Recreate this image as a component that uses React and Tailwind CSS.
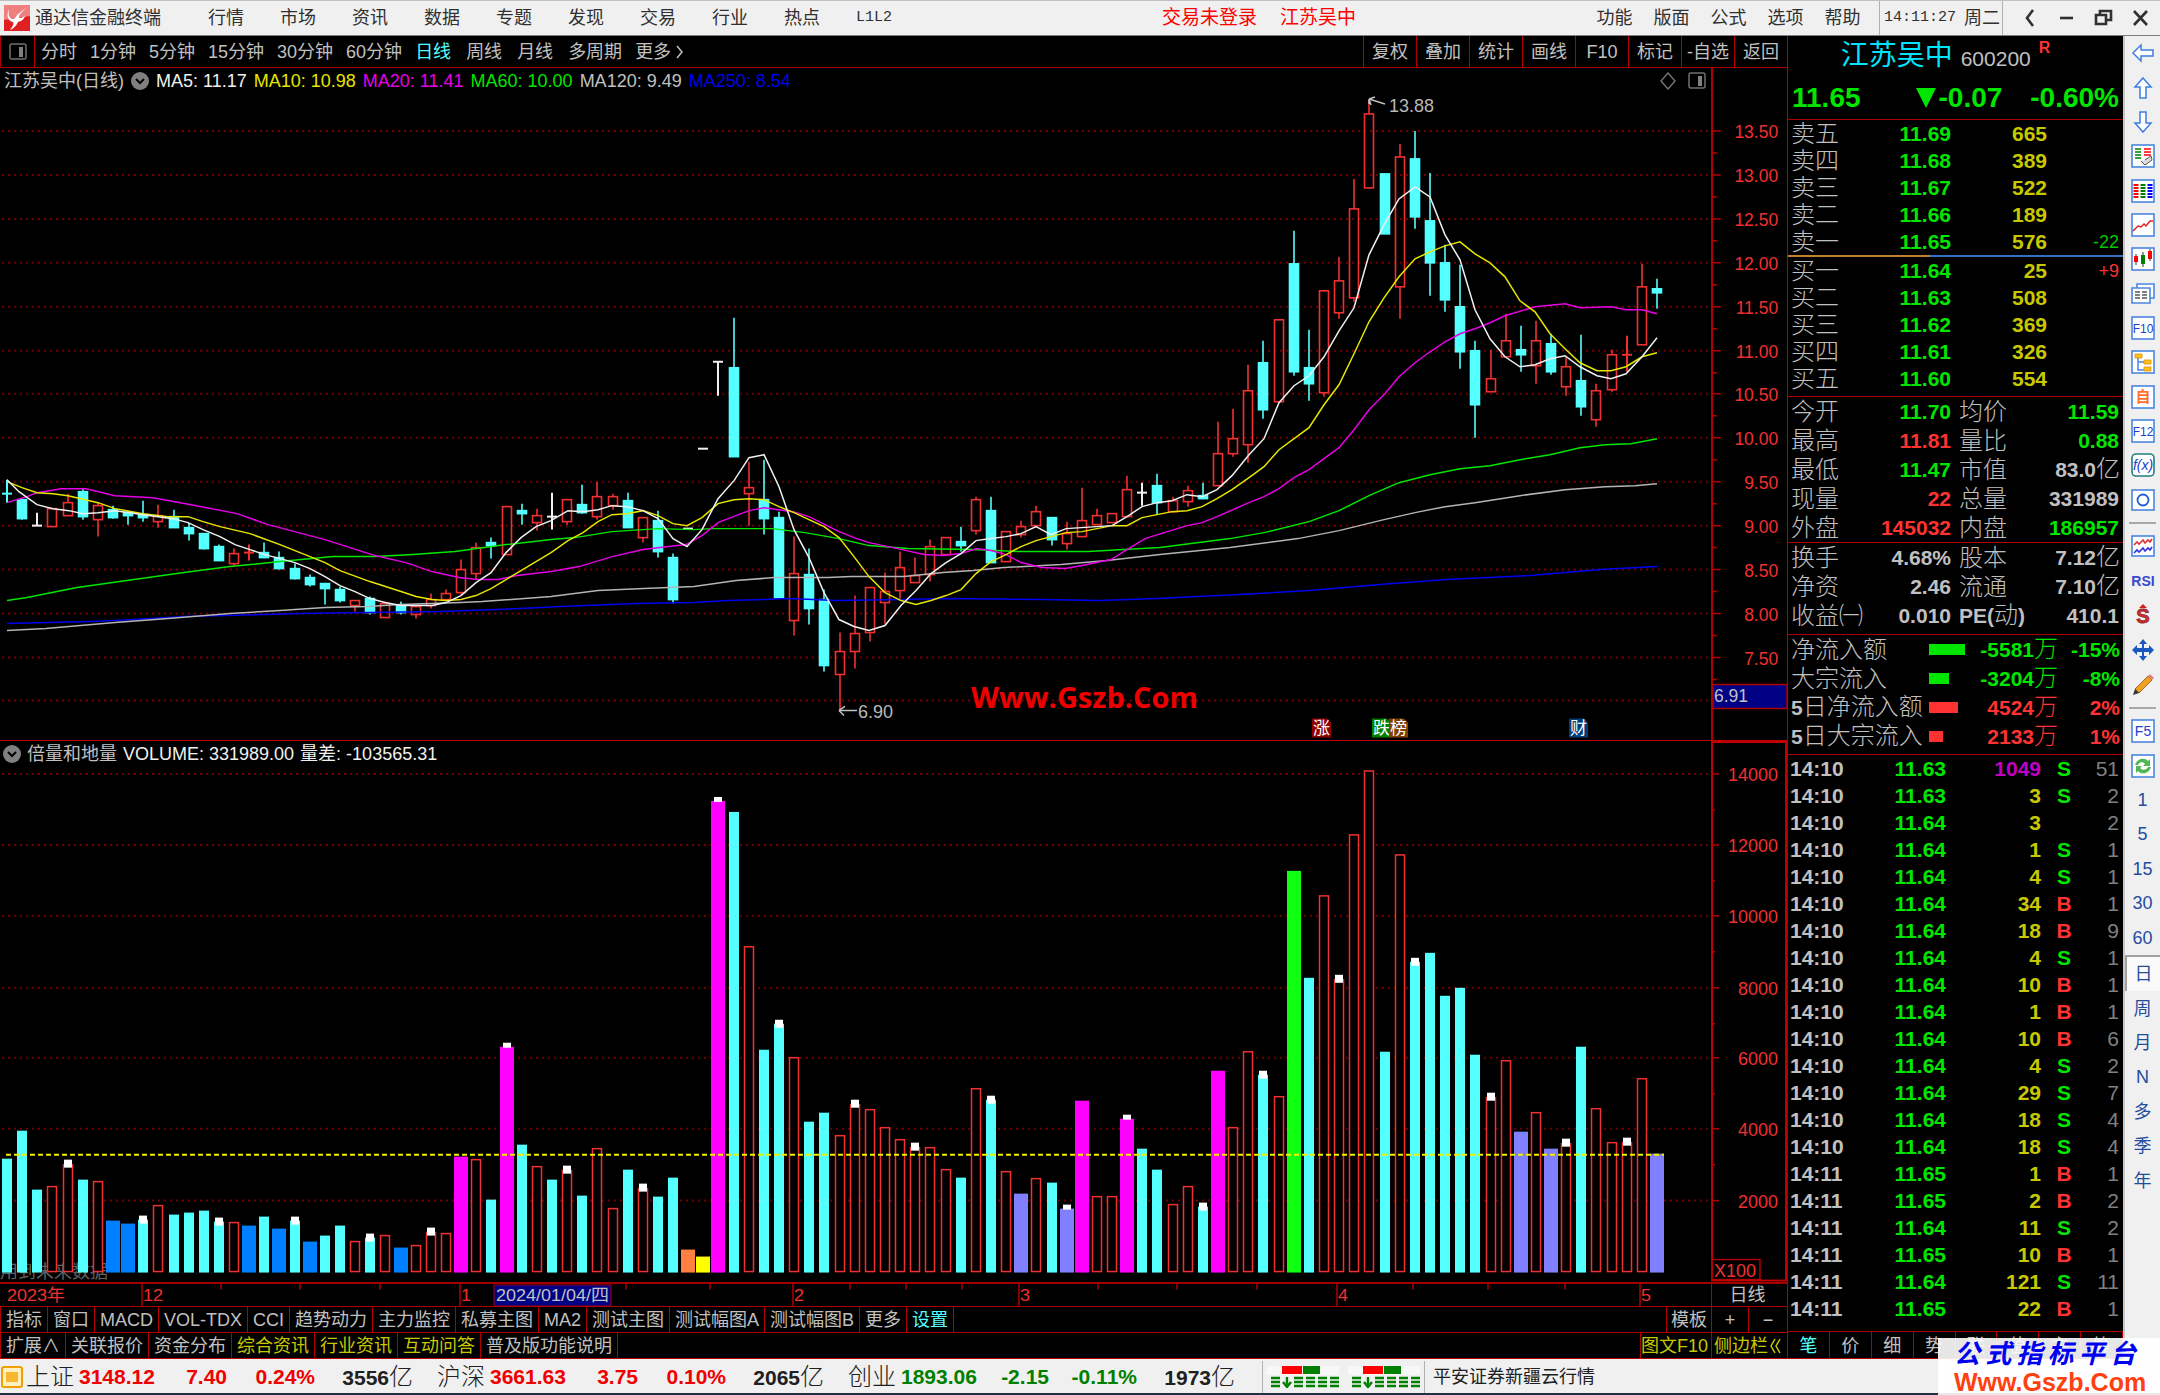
import React from "react";

const STEP = 15.138;
const cx = (i) => Math.round(7 + i * STEP);

// kind: r = rising, c = falling, w = flat; then high, low, body top, body bottom
const CANDLES = [
  ["c", 480, 503, 494, 495], ["c", 499, 520, 500, 519], ["w", 513, 526, 526, 526], ["r", 509, 527, 509, 527], ["r", 494, 516, 503, 516],
  ["c", 489, 520, 492, 517], ["r", 503, 537, 506, 520], ["c", 506, 519, 510, 518], ["c", 511, 525, 513, 516], ["c", 501, 522, 515, 518],
  ["r", 505, 528, 516, 522], ["c", 510, 528, 517, 528], ["c", 523, 541, 528, 534], ["c", 534, 550, 534, 549], ["c", 545, 561, 547, 561],
  ["r", 549, 567, 554, 564], ["r", 545, 561, 553, 555], ["c", 543, 558, 553, 558], ["c", 552, 570, 558, 569], ["c", 564, 580, 569, 579],
  ["c", 575, 587, 578, 585], ["c", 584, 605, 584, 589], ["c", 587, 603, 590, 601], ["r", 601, 612, 601, 606], ["c", 597, 615, 599, 613],
  ["r", 602, 618, 604, 618], ["c", 602, 615, 606, 613], ["r", 607, 619, 607, 615], ["r", 594, 609, 600, 606], ["r", 590, 601, 594, 600],
  ["r", 560, 595, 570, 593], ["r", 543, 580, 548, 574], ["c", 538, 559, 543, 546], ["r", 506, 555, 507, 555], ["c", 504, 525, 511, 514],
  ["r", 509, 531, 516, 523], ["w", 493, 530, 517, 517], ["r", 500, 525, 500, 522], ["c", 485, 514, 505, 513], ["r", 482, 520, 497, 517],
  ["r", 494, 510, 497, 506], ["c", 493, 528, 501, 528], ["r", 518, 543, 518, 538], ["c", 511, 558, 521, 552], ["c", 554, 604, 558, 600],
  ["w", 529, 529, 529, 529], ["w", 449, 449, 449, 449], ["w", 362, 396, 362, 362], ["c", 318, 457, 368, 457], ["r", 462, 526, 488, 494],
  ["c", 460, 535, 500, 519], ["c", 512, 598, 518, 598], ["r", 537, 636, 574, 621], ["c", 549, 625, 575, 609], ["c", 590, 672, 600, 666],
  ["r", 633, 711, 652, 675], ["r", 596, 669, 634, 652], ["r", 588, 642, 588, 633], ["r", 573, 625, 592, 603], ["r", 552, 600, 568, 591],
  ["r", 558, 583, 576, 583], ["r", 540, 582, 547, 575], ["r", 538, 555, 538, 555], ["c", 527, 552, 542, 546], ["r", 497, 535, 500, 531],
  ["c", 497, 563, 511, 563], ["r", 532, 562, 532, 562], ["r", 521, 538, 527, 535], ["r", 506, 528, 512, 526], ["c", 518, 546, 518, 540],
  ["r", 522, 550, 534, 544], ["r", 488, 537, 521, 537], ["r", 509, 525, 516, 525], ["r", 514, 523, 514, 523], ["r", 476, 517, 490, 517],
  ["w", 483, 506, 493, 493], ["c", 474, 515, 486, 503], ["r", 497, 512, 501, 512], ["r", 486, 507, 491, 502], ["c", 483, 499, 496, 499],
  ["r", 422, 486, 454, 486], ["r", 409, 457, 439, 454], ["r", 365, 463, 391, 445], ["c", 341, 419, 363, 410], ["r", 320, 402, 320, 402],
  ["c", 231, 376, 264, 372], ["c", 330, 401, 368, 384], ["r", 291, 397, 291, 393], ["r", 257, 319, 281, 313], ["r", 179, 302, 209, 298],
  ["r", 100, 188, 114, 188], ["c", 174, 234, 174, 234], ["r", 144, 319, 157, 287], ["c", 131, 229, 159, 217], ["c", 173, 296, 221, 263],
  ["c", 245, 312, 263, 300], ["c", 265, 369, 307, 352], ["c", 341, 438, 351, 405], ["r", 350, 392, 379, 392], ["r", 314, 357, 341, 357],
  ["c", 326, 372, 350, 355], ["r", 321, 384, 341, 366], ["c", 334, 375, 344, 372], ["r", 357, 396, 367, 387], ["c", 335, 416, 381, 407],
  ["r", 384, 427, 391, 420], ["r", 350, 392, 355, 390], ["r", 336, 372, 355, 355], ["r", 264, 345, 287, 345], ["c", 279, 309, 289, 293],
];

const MA_LINES = [
  { color: "#0000f0", points: "7,624 90,622 134,620 184,617 300,614 440,612 520,609 560,607 636,604 694,603 728,601 790,599 836,601 904,600 943,599 1042,600 1100,601 1157,599 1240,595 1309,591 1380,585 1446,580 1530,576 1600,570 1657,567" },
  { color: "#b4b4b4", points: "7,631 46,629 115,623 168,619 230,614 280,611 325,608 367,607 400,605 461,603 482,602 551,597 598,591 644,589 694,587 736,581 774,578 828,578 851,577 904,577 943,573 973,571 1004,568 1061,565 1107,561 1160,555 1230,548 1298,539 1339,531 1384,520 1415,513 1445,507 1475,503 1520,496 1565,490 1605,487 1635,486 1657,484" },
  { color: "#00e600", points: "7,601 27,598 77,588 134,580 184,573 230,567 280,562 333,557 375,557 413,555 455,552 506,545 551,540 575,538 612,532 658,529 694,530 713,529 772,529 805,533 839,539 869,546 908,549 973,550 1019,552 1088,552 1160,548 1230,539 1264,533 1309,522 1339,511 1369,496 1399,483 1430,475 1460,469 1490,466 1520,460 1550,455 1580,448 1605,445 1631,444 1657,439" },
  { color: "#e600e6", points: "7,503 27,497 37,493 61,489 86,489 115,496 153,498 191,505 237,514 268,525 325,540 375,556 406,563 432,572 459,578 478,580 498,580 517,576 551,572 579,567 612,557 643,550 686,545 702,536 718,523 749,511 764,508 793,512 809,517 839,532 854,538 869,543 893,548 924,555 943,556 961,554 977,549 991,551 1006,555 1021,563 1042,568 1065,569 1082,566 1111,560 1127,550 1145,539 1161,534 1187,526 1202,523 1217,517 1249,503 1264,497 1279,489 1294,478 1309,470 1324,459 1339,448 1354,430 1369,410 1384,395 1399,377 1415,363 1430,352 1445,342 1460,334 1475,329 1490,323 1505,316 1535,307 1565,304 1580,308 1611,307 1626,310 1642,310 1657,314" },
  { color: "#e6e600", points: "7,482 22,488 37,493 53,494 68,496 98,503 115,509 143,514 168,517 188,517 203,522 220,527 250,534 280,545 310,557 325,563 340,571 370,582 401,592 416,597 432,600 446,601 461,600 476,596 491,589 506,580 521,571 551,553 568,541 583,533 598,522 612,515 627,514 643,511 658,516 673,524 687,526 702,518 718,504 734,500 749,499 764,500 779,507 794,513 809,520 824,527 839,538 854,557 869,577 885,593 901,601 916,605 931,601 946,596 961,590 976,574 991,562 1006,555 1021,547 1036,541 1066,533 1082,532 1112,526 1127,526 1142,518 1157,515 1172,512 1187,511 1202,507 1217,499 1232,490 1249,478 1264,467 1279,450 1309,428 1324,405 1339,385 1354,354 1369,322 1384,298 1399,277 1415,259 1430,252 1445,246 1460,242 1475,254 1490,263 1505,277 1520,301 1535,312 1550,334 1565,349 1580,363 1597,371 1611,371 1626,367 1642,357 1657,353" },
  { color: "#f0f0f0", points: "7,480 19,492 37,505 53,509 69,511 83,514 98,513 115,511 130,513 143,515 158,517 173,519 188,523 203,530 220,537 235,545 250,550 265,555 280,559 295,563 310,569 325,577 340,586 355,592 370,599 385,603 401,606 432,606 446,603 461,596 476,583 491,573 506,553 521,538 536,527 551,521 568,511 583,512 598,510 612,506 627,507 643,511 658,519 673,539 687,547 702,530 718,499 734,481 749,458 764,455 779,487 794,530 809,558 824,593 839,620 854,627 869,631 885,626 901,606 916,591 931,574 946,563 961,554 976,541 991,539 1006,537 1021,534 1036,527 1051,535 1066,529 1112,526 1127,517 1142,507 1157,503 1172,501 1187,495 1202,497 1217,490 1232,476 1249,455 1264,439 1279,403 1294,386 1309,376 1324,357 1339,331 1354,308 1369,255 1384,225 1399,199 1415,187 1430,197 1445,235 1460,260 1475,310 1490,339 1505,357 1520,367 1535,365 1550,359 1565,356 1580,367 1597,376 1611,379 1626,374 1642,357 1657,338" },
];

const PRICE_GRID = [
  ["13.50", 131], ["13.00", 175], ["12.50", 219], ["12.00", 263], ["11.50", 307], ["11.00", 351], ["10.50", 394],
  ["10.00", 438], ["9.50", 482], ["9.00", 526], ["8.50", 570], ["8.00", 614], ["7.50", 658], ["", 701],
];

// colour key, top of the bar; a trailing * marks the bars that carry a white cap
const VOLUME = (
  "c1159 c1131 c1190 r1186 r1164* c1180 r1181 b1221 b1224 c1220* r1205 c1215 c1213 c1211 c1222* r1222 b1226 c1217 b1229 c1221* " +
  "b1242 c1236 c1226 r1241 c1238* r1235 b1248 r1245 r1232* r1233 m1157 r1159 c1200 m1047* c1145 r1166 c1180 r1170* c1196 r1148 " +
  "r1208 c1170 r1188* c1197 c1178 o1250 y1257 m801* c812 r946 c1050 c1024* r1057 c1122 c1113 r1135 r1104* r1109 r1127 r1139 " +
  "r1147* r1147 r1169 c1178 r1088 c1100* r1171 p1194 r1178 c1183 p1209* m1101 r1196 r1196 m1119* c1149 c1170 r1204 r1186 c1207* " +
  "m1071 r1127 r1051 c1075* r1096 g871 c978 r895 r979* r834 r770 c1052 r854 c962* c953 c996 c988 c1055 r1097* r1060 " +
  "p1132 r1112 p1149 r1143* c1047 r1108 r1142 r1142* r1078 p1154"
).split(" ");

const VOL_COLORS = { c: "#54ffff", b: "#0080ff", m: "#ff00ff", o: "#ff8040", y: "#ffff00", p: "#8080ff", g: "#10ff10" };
const VOL_GRID = [["14000", 774], ["12000", 845], ["10000", 916], ["8000", 988], ["6000", 1058], ["4000", 1129], ["2000", 1201]];
const BASE = 1273;
const RED = "#f03030";

function PriceChart() {
  return (
    <svg viewBox="0 68 1711 673" preserveAspectRatio="none" className="block h-full w-full">
      {PRICE_GRID.map(([, y]) => (
        <line key={y} x1="2" x2="1711" y1={y} y2={y} stroke="#a00000" strokeWidth="2" strokeDasharray="2 4" opacity="0.7" />
      ))}
      {CANDLES.map(([k, h, l, t, b], i) => {
        const x = cx(i);
        const color = k === "c" ? "#54ffff" : k === "r" ? RED : "#f0f0f0";
        if (b - t < 3)
          return (
            <g key={i} stroke={color} strokeWidth="2">
              {l > h && <line x1={x} x2={x} y1={h} y2={l} />}
              <line x1={x - 5} x2={x + 5} y1={t} y2={t} />
            </g>
          );
        return (
          <g key={i} stroke={color} strokeWidth="1.6">
            {h < t && <line x1={x} x2={x} y1={h} y2={t} />}
            {l > b && <line x1={x} x2={x} y1={b} y2={l} />}
            <rect x={x - 4.5} y={t} width="9" height={b - t} fill={k === "c" ? color : "none"} />
          </g>
        );
      })}
      {MA_LINES.map((m) => (
        <polyline key={m.color} points={m.points} fill="none" stroke={m.color} strokeWidth="1.5" />
      ))}
      <g fill="none" stroke="#c0c0c0" strokeWidth="1.5">
        <path d="M1369 99l16 5M1369 99l6-2M1369 99l2 6M1369 99v5" />
        <path d="M839 711h18M839 711l6-4M839 711l5 5" />
      </g>
      <g fontSize="18" fill="#b8b8b8">
        <text x="1389" y="112">13.88</text>
        <text x="858" y="719">6.90</text>
      </g>
      <text x="971" y="709" fontSize="29" fontWeight="700" fill="#ee0000" fontFamily="Open Sans">Www.Gszb.Com</text>
      {[["涨", 1312, "#8c0000"], ["跌", 1372, "#008000"], ["榜", 1389, "#804000"], ["财", 1569, "#003c78"]].map(([t, x, c]) => (
        <g key={t}>
          <path d={`M${x} 719h15l4 4v15h-19z`} fill={c} />
          <text x={x + 1} y="735" fontSize="17" fontWeight="400" fill="#fff">{t}</text>
        </g>
      ))}
    </svg>
  );
}

function PriceAxis() {
  return (
    <svg viewBox="1711 68 76 673" preserveAspectRatio="none" className="block h-full w-full">
      {PRICE_GRID.map(([label, y]) => (
        <g key={y}>
          {label && <path d={`M1711 ${y}h8M1711 ${y + 22}h4`} stroke="#b00000" strokeWidth="1.5" />}
          <text x="1778" y={y + 7} textAnchor="end" fontSize="18" fill={RED}>{label}</text>
        </g>
      ))}
      <rect x="1711" y="685" width="76" height="24" fill="#000084" stroke="#b00000" strokeWidth="1.5" />
      <text x="1712" y="703" fontSize="18" fill="#c0c0c0">6.91</text>
    </svg>
  );
}

function VolumeChart() {
  return (
    <svg viewBox="0 741 1711 541" preserveAspectRatio="none" className="block h-full w-full">
      <text x="0" y="1278" fontSize="18" fill="#606060">用到未来数据</text>
      {VOL_GRID.map(([, y]) => (
        <line key={y} x1="2" x2="1711" y1={y} y2={y} stroke="#a00000" strokeWidth="2" strokeDasharray="2 4" opacity="0.7" />
      ))}
      {VOLUME.map((v, i) => {
        const k = v[0];
        const y = parseInt(v.slice(1), 10);
        const x = cx(i);
        const wide = k !== "r" && k !== "c";
        const half = wide ? 7 : 5;
        const cap = v.endsWith("*") && <rect x={x - 4} y={y - 4} width="8" height={wide ? 5 : 8} fill="#fff" />;
        return (
          <g key={i}>
            {k === "r" ? (
              <rect x={x - 4.5} y={y + 1} width="9" height={BASE - y - 2} fill="#000" stroke={RED} strokeWidth="1.5" />
            ) : (
              <rect x={x - half} y={y} width={half * 2} height={BASE - y} fill={VOL_COLORS[k]} />
            )}
            {cap}
          </g>
        );
      })}
      <line x1="6" x2="1664" y1="1155" y2="1155" stroke="#f0f000" strokeWidth="2" strokeDasharray="5 3" />
    </svg>
  );
}

function VolumeAxis() {
  return (
    <svg viewBox="1711 741 76 541" preserveAspectRatio="none" className="block h-full w-full">
      <rect x="1712" y="742" width="74" height="539" fill="none" stroke="#c00000" strokeWidth="2" />
      {VOL_GRID.map(([label, y]) => (
        <g key={y}>
          <path d={`M1711 ${y}h8${y < 1200 ? `M1711 ${y + 36}h4` : ""}`} stroke="#b00000" strokeWidth="1.5" />
          <text x="1778" y={y + 7} textAnchor="end" fontSize="18" fill={RED}>{label}</text>
        </g>
      ))}
      <rect x="1712" y="1260" width="48" height="20" fill="none" stroke="#b00000" strokeWidth="1.5" />
      <text x="1714" y="1277" fontSize="18" fill={RED}>X100</text>
    </svg>
  );
}

function DateAxis() {
  return (
    <svg viewBox="0 1282 1711 24" preserveAspectRatio="none" className="block h-full w-full">
      <path
        d="M221 1282v6M300 1282v6M380 1282v6M626 1282v6M710 1282v6M850 1282v6M906 1282v6M962 1282v6M1098 1282v6M1177 1282v6M1257 1282v6M1413 1282v6M1488 1282v6M1565 1282v6M142 1282v24M460 1282v24M793 1282v24M1019 1282v24M1337 1282v24M1640 1282v24"
        stroke="#b00000"
        strokeWidth="1.5"
      />
      <rect x="494" y="1283" width="117" height="23" fill="#000084" stroke="#b00000" />
      <g fontSize="18" fill={RED}>
        <text x="7" y="1301">2023年</text>
        <text x="143" y="1301">12</text>
        <text x="461" y="1301">1</text>
        <text x="794" y="1301">2</text>
        <text x="1020" y="1301">3</text>
        <text x="1338" y="1301">4</text>
        <text x="1641" y="1301">5</text>
        <text x="496" y="1301" fill="#c0c0c0">2024/01/04/四</text>
      </g>
    </svg>
  );
}

function Chevron() {
  return (
    <svg viewBox="0 0 18 18" className="block size-[18px]">
      <circle cx="9" cy="9" r="9" fill="#808080" />
      <path d="M5 7l4 4 4-4" fill="none" stroke="#000" strokeWidth="2" />
    </svg>
  );
}

function PanelIcon() {
  return (
    <svg viewBox="0 0 18 18" className="block size-[18px]">
      <rect x="1" y="1" width="16" height="15" rx="2" fill="none" stroke="#707070" strokeWidth="1.5" />
      <rect x="10" y="4" width="4" height="10" fill="#808080" />
    </svg>
  );
}

function Header() {
  return (
    <header className="flex h-9 shrink-0 items-center border-t border-b border-t-[#c0c0c0] border-b-[#808080] bg-[#f0f0f0] text-lg text-[#303030]">
      <svg viewBox="0 0 26 26" className="ml-1 block size-[26px] shrink-0">
        <rect width="26" height="26" fill="#e02020" />
        <path d="M0 0h26v11L0 15z" fill="#f08080" />
        <path d="M5 4c-1 6 0 9 3 10 3 0 4-2 5-4l10-8c-6 6-8 8-8 10 0 2 3 1 6-1-2 5-4 5-7 6-1 2-3 6-8 8 3-4 4-6 3-8-5-1-7-6-4-13z" fill="#fff" />
      </svg>
      <div className="ml-[5px] whitespace-nowrap">通达信金融终端</div>
      <nav className="ml-[29px] flex">
        {["行情", "市场", "资讯", "数据", "专题", "发现", "交易", "行业", "热点"].map((t) => (
          <button key={t} className="w-[72px]">{t}</button>
        ))}
        <button className="w-[72px] font-['Liberation_Mono',monospace] text-[15px]">L1L2</button>
      </nav>
      <div className="ml-auto flex gap-[23px] pr-[230px] text-[19px] text-[#ff0000]">
        <button>交易未登录</button>
        <button>江苏吴中</button>
      </div>
      <nav className="flex">
        {["功能", "版面", "公式", "选项", "帮助"].map((t) => (
          <button key={t} className="w-[57px]">{t}</button>
        ))}
      </nav>
      <div className="ml-2 flex h-full w-[124px] items-center gap-2 border-x border-[#b0b0b0] pl-1">
        <span className="font-['Liberation_Mono',monospace] text-[15px]">14:11:27</span>
        <span>周二</span>
      </div>
      <div className="flex w-[157px] shrink-0 items-center justify-around pl-2 text-[#303030]">
        {[
          ["后退", "M13 2L7 10l6 8"],
          ["最小化", "M3 10h13"],
          ["还原", "M2 7h10v9H2zM6 7V3h11v9h-4"],
          ["关闭", "M3 3l13 14M16 3L3 17"],
        ].map(([name, d]) => (
          <button key={name} aria-label={name}>
            <svg viewBox="0 0 20 20" className="block size-5">
              <path d={d} fill="none" stroke="currentColor" strokeWidth="2.6" />
            </svg>
          </button>
        ))}
      </div>
    </header>
  );
}

function PeriodBar() {
  return (
    <div className="flex h-8 shrink-0 items-stretch border-b border-l border-[#b00000] text-lg">
      <button aria-label="侧栏" className="flex w-[34px] items-center justify-center border-r border-[#b00000]">
        <PanelIcon />
      </button>
      <nav className="ml-1.5 flex items-center gap-[13px]">
        {["分时", "1分钟", "5分钟", "15分钟", "30分钟", "60分钟"].map((t) => (
          <button key={t}>{t}</button>
        ))}
        <div className="flex items-center gap-[15px]">
          {["日线", "周线", "月线", "多周期"].map((t) => (
            <button key={t} className={t === "日线" ? "text-[#54ffff]" : ""}>{t}</button>
          ))}
        </div>
        <button className="flex items-center gap-1">
          更多
          <svg viewBox="0 0 10 18" className="block h-[18px] w-2.5"><path d="M2 3l5 6-5 6" fill="none" stroke="#c0c0c0" strokeWidth="1.5" /></svg>
        </button>
      </nav>
      <div className="ml-auto flex">
        {["复权", "叠加", "统计", "画线", "F10", "标记", "-自选", "返回"].map((t) => (
          <button key={t} className="w-[53px] border-l border-[#b00000] text-center whitespace-nowrap">{t}</button>
        ))}
      </div>
    </div>
  );
}

const TABS = ["指标", "窗口", "MACD", "VOL-TDX", "CCI", "趋势动力", "主力监控", "私募主图", "MA2", "测试主图", "测试幅图A", "测试幅图B", "更多", "设置"];
const LINKS = ["扩展∧", "关联报价", "资金分布", "综合资讯", "行业资讯", "互动问答", "普及版功能说明"];

function ChartArea() {
  return (
    <section className="flex min-w-0 flex-1 flex-col">
      <PeriodBar />
      <div className="relative flex min-h-0 flex-[673_1_0%] border-b border-[#c00000]">
        <div className="min-w-0 flex-1"><PriceChart /></div>
        <div className="w-[76px] border-l-2 border-[#b00000]"><PriceAxis /></div>
        <div className="absolute inset-x-0 top-0 flex h-[26px] items-center gap-[7px] pr-[81px] pl-1 text-lg whitespace-nowrap">
          <span>江苏吴中(日线)</span>
          <Chevron />
          <span className="text-[#f0f0f0]">MA5: 11.17</span>
          <span className="text-[#e6e600]">MA10: 10.98</span>
          <span className="text-[#e600e6]">MA20: 11.41</span>
          <span className="text-[#00e600]">MA60: 10.00</span>
          <span>MA120: 9.49</span>
          <span className="text-[#0000f0]">MA250: 8.54</span>
          <svg viewBox="0 0 18 18" className="mr-1 ml-auto block size-[18px]"><path d="M9 1l7 8-7 8-7-8z" fill="none" stroke="#707070" strokeWidth="1.5" /></svg>
          <PanelIcon />
        </div>
      </div>
      <div className="relative flex min-h-0 flex-[541_1_0%]">
        <div className="min-w-0 flex-1"><VolumeChart /></div>
        <div className="w-[76px]"><VolumeAxis /></div>
        <div className="absolute top-0 left-0 flex h-[26px] items-center gap-1.5 pl-[3px] text-lg">
          <Chevron />
          <span>倍量和地量</span>
          <span className="text-[#f0f0f0]">VOLUME: 331989.00</span>
          <span className="text-[#f0f0f0]">量差: -103565.31</span>
        </div>
      </div>
      <div className="flex h-6 shrink-0 border-t-2 border-[#a00000]">
        <div className="min-w-0 flex-1"><DateAxis /></div>
        <div className="flex w-[76px] items-center justify-center border-l border-[#b00000] pr-1 text-lg">日线</div>
      </div>
      <div className="flex h-[26px] shrink-0 border-t border-l border-[#b00000] text-lg leading-6 whitespace-nowrap">
        {TABS.map((t) => (
          <button key={t} className={t === "设置" ? "border-r border-[#b00000] px-[5px] text-[#54ffff]" : "border-r border-[#b00000] px-[5px]"}>{t}</button>
        ))}
        <button className="ml-auto w-[46px] border-x border-[#b00000]">模板</button>
        <button className="w-[37px] border-r border-[#b00000]">+</button>
        <button className="w-[38px]">−</button>
      </div>
      <div className="flex h-[27px] shrink-0 border-y border-l border-[#b00000] text-lg leading-[26px] whitespace-nowrap">
        {LINKS.map((t, i) => (
          <a key={t} href="#" className={i > 2 && i < 6 ? "border-r border-[#b00000] px-[5px] text-[#c8c800]" : "border-r border-[#b00000] px-[5px]"}>{t}</a>
        ))}
        <a href="#" className="ml-auto w-[72px] border-x border-[#b00000] text-[#c8c800]">图文F10</a>
        <button className="flex w-[75px] items-center justify-between pr-1.5 pl-0.5 text-[#c8c800]">
          侧边栏
          <svg viewBox="0 0 12 16" className="block h-4 w-3"><path d="M6 1L2 8l4 7M11 1L7 8l4 7" fill="none" stroke="#c8c800" strokeWidth="1.5" /></svg>
        </button>
      </div>
    </section>
  );
}

const G = "text-[#00e600]";
const R = "text-[#ff3232]";
const W = "text-[#c0c0c0]";

function OrderRows({ rows }) {
  return (
    <table className="w-full table-fixed">
      <colgroup>
        <col className="w-[76px]" />
        <col className="w-[87px]" />
        <col className="w-24" />
        <col />
      </colgroup>
      <tbody>
        {rows.map(([label, price, vol, delta]) => (
          <tr key={label} className="h-[27px] text-right text-[21px] leading-[27px] font-bold">
            <th className="pl-[3px] text-left text-2xl leading-[27px] font-light">{label}</th>
            <td className={G}>{price}</td>
            <td className="text-[#c8c800]">{vol}</td>
            <td className={delta && delta[0] === "+" ? "pr-1 text-lg leading-6 font-normal text-[#ff3232]" : "pr-1 text-lg leading-6 font-normal text-[#00c800]"}>{delta}</td>
          </tr>
        ))}
      </tbody>
    </table>
  );
}

function StatRows({ rows }) {
  return (
    <table className="w-full table-fixed">
      <colgroup>
        <col className="w-[76px]" />
        <col className="w-[87px]" />
        <col className="w-[72px]" />
        <col />
      </colgroup>
      <tbody>
        {rows.map(([l1, v1, c1, l2, v2, c2, unit]) => (
          <tr key={l1} className="h-[29px] text-right text-[21px] leading-7 font-bold whitespace-nowrap">
            <th className="pl-[3px] text-left text-2xl leading-7 font-light">{l1}</th>
            <td className={c1}>{v1}</td>
            <th className="pl-2 text-left text-2xl leading-7 font-light">
              {l2 === "PE(动)" ? <><span className="text-[21px] leading-7 font-bold">PE(</span>动<span className="text-[21px] leading-7 font-bold">)</span></> : l2}
            </th>
            <td className={c2}>
              <span className={unit ? "" : "pr-1"}>{v2}</span>
              {unit && <span className="pr-[3px] text-2xl leading-7 font-light">{unit}</span>}
            </td>
          </tr>
        ))}
      </tbody>
    </table>
  );
}

const SELL = [["卖五", "11.69", "665"], ["卖四", "11.68", "389"], ["卖三", "11.67", "522"], ["卖二", "11.66", "189"], ["卖一", "11.65", "576", "-22"]];
const BUY = [["买一", "11.64", "25", "+9"], ["买二", "11.63", "508"], ["买三", "11.62", "369"], ["买四", "11.61", "326"], ["买五", "11.60", "554"]];
const STATS = [
  ["今开", "11.70", G, "均价", "11.59", G],
  ["最高", "11.81", R, "量比", "0.88", G],
  ["最低", "11.47", G, "市值", "83.0", W, "亿"],
  ["现量", "22", R, "总量", "331989", W],
  ["外盘", "145032", R, "内盘", "186957", G],
];
const FUND = [
  ["换手", "4.68%", W, "股本", "7.12", W, "亿"],
  ["净资", "2.46", W, "流通", "7.10", W, "亿"],
  ["收益㈠", "0.010", W, "PE(动)", "410.1", W],
];
const FLOW = [
  ["", "净流入额", 36, "-5581", "-15%", false],
  ["", "大宗流入", 20, "-3204", "-8%", false],
  ["5", "日净流入额", 29, "4524", "2%", true],
  ["5", "日大宗流入", 14, "2133", "1%", true],
];
const TICKS = [
  ["14:10", "11.63", "1049", "S", "51"], ["14:10", "11.63", "3", "S", "2"], ["14:10", "11.64", "3", "", "2"], ["14:10", "11.64", "1", "S", "1"],
  ["14:10", "11.64", "4", "S", "1"], ["14:10", "11.64", "34", "B", "1"], ["14:10", "11.64", "18", "B", "9"], ["14:10", "11.64", "4", "S", "1"],
  ["14:10", "11.64", "10", "B", "1"], ["14:10", "11.64", "1", "B", "1"], ["14:10", "11.64", "10", "B", "6"], ["14:10", "11.64", "4", "S", "2"],
  ["14:10", "11.64", "29", "S", "7"], ["14:10", "11.64", "18", "S", "4"], ["14:10", "11.64", "18", "S", "4"], ["14:11", "11.65", "1", "B", "1"],
  ["14:11", "11.65", "2", "B", "2"], ["14:11", "11.64", "11", "S", "2"], ["14:11", "11.65", "10", "B", "1"], ["14:11", "11.64", "121", "S", "11"],
  ["14:11", "11.65", "22", "B", "1"],
];

function QuotePanel() {
  return (
    <aside className="flex w-[336px] shrink-0 flex-col border-l border-[#b00000]">
      <div className="flex h-10 shrink-0 items-center justify-center gap-2 pr-5 whitespace-nowrap">
        <h1 className="text-[28px] leading-10 text-[#00e5ff]">江苏吴中</h1>
        <span className="pt-1.5 text-[21px]">600200</span>
        <span className="self-start text-base font-bold text-[#ff3232]">R</span>
      </div>
      <div className="flex h-11 shrink-0 items-center justify-between border-b border-[#b00000] px-1 text-[28px] font-bold text-[#00e600]">
        <span>11.65</span>
        <span className="ml-7 flex items-center">
          <svg viewBox="0 0 20 20" className="mr-0.5 block size-5"><path d="M0 0h20L10 20z" fill="#00e600" /></svg>
          -0.07
        </span>
        <span>-0.60%</span>
      </div>
      <OrderRows rows={SELL} />
      <div className="flex h-0.5 shrink-0">
        <div className="w-[142px] bg-[#c08030]" />
        <div className="flex-1 bg-[#3070c0]" />
      </div>
      <div className="border-b border-[#b00000] pb-1"><OrderRows rows={BUY} /></div>
      <div className="border-b border-[#b00000]"><StatRows rows={STATS} /></div>
      <div className="border-b border-[#b00000] pb-1"><StatRows rows={FUND} /></div>
      <div className="border-b border-[#b00000] pb-[3px]">
        <table className="w-full table-fixed">
          <colgroup>
            <col className="w-[141px]" />
            <col className="w-9" />
            <col className="w-[93px]" />
            <col />
          </colgroup>
          <tbody>
            {FLOW.map(([n, label, w, v, p, up]) => (
              <tr key={n + label} className={up ? "h-[29px] text-right text-[21px] leading-7 font-bold text-[#ff3232]" : "h-[29px] text-right text-[21px] leading-7 font-bold text-[#00e600]"}>
                <th className="pl-[3px] text-left text-2xl leading-7 font-light whitespace-nowrap text-[#c0c0c0]">
                  {n && <span className="text-[21px] leading-7 font-bold">{n}</span>}
                  {label}
                </th>
                <td><div className="h-[11px] bg-current" style={{ width: w }} /></td>
                <td>{v}<span className="text-2xl leading-7 font-light">万</span></td>
                <td className="pr-[3px]">{p}</td>
              </tr>
            ))}
          </tbody>
        </table>
      </div>
      <table className="w-full table-fixed">
        <colgroup>
          <col className="w-[76px]" />
          <col className="w-[82px]" />
          <col className="w-[95px]" />
          <col className="w-[46px]" />
          <col />
        </colgroup>
        <tbody>
          {TICKS.map(([t, p, v, s, n], i) => (
            <tr key={i} className="h-[27px] text-right text-[21px] leading-[27px] font-bold">
              <td className="pl-0.5 text-left">{t}</td>
              <td className={G}>{p}</td>
              <td className={i === 0 ? "text-[#c000c0]" : "text-[#c8c800]"}>{v}</td>
              <td className={s === "B" ? "text-center text-[#ff3232]" : "text-center text-[#00e600]"}>{s}</td>
              <td className="pr-1 font-normal text-[#808080]">{n}</td>
            </tr>
          ))}
        </tbody>
      </table>
      <div className="mt-auto grid h-7 shrink-0 grid-cols-8 border-y border-[#b00000] text-lg">
        {["笔", "价", "细", "势", "联", "值", "主", "筹"].map((t) => (
          <button key={t} className={t === "笔" ? "border-r border-[#b00000] text-[#54ffff]" : "border-r border-[#b00000]"}>{t}</button>
        ))}
      </div>
    </aside>
  );
}

function Box({ children }) {
  return (
    <>
      <rect x="1" y="1" width="22" height="22" fill="#fff" stroke="#4a86e0" strokeWidth="1.6" />
      {children}
    </>
  );
}
const T = ({ children, size = 13, color = "#2040d0", weight = 400 }) => (
  <text x="12" y="17" textAnchor="middle" fontSize={size} fill={color} fontWeight={weight}>{children}</text>
);

const TOP_TOOLS = [
  ["左移", <path d="M2 12l8-8v5h12v6H10v5z" fill="#fff" stroke="#3f7de0" strokeWidth="1.5" />],
  ["上移", <path d="M12 2l8 9h-5v11H9V11H4z" fill="#fff" stroke="#3f7de0" strokeWidth="1.5" />],
  ["下移", <path d="M12 22l8-9h-5V2H9v11H4z" fill="#fff" stroke="#3f7de0" strokeWidth="1.5" />],
  ["自选报价", <Box><path d="M4 5h6M4 8h6M4 11h6M4 14h6" stroke="#008000" strokeWidth="1.6" /><path d="M13 5h7M13 8h7M13 11h7" stroke="#f00" strokeWidth="1.6" /><path d="M10 17l4 4 7-5-1-4-6 4" fill="#ddd" stroke="#555" /></Box>],
  ["报价表", <Box><path d="M5 5v15" stroke="#f00" strokeWidth="5" strokeDasharray="2 1" /><path d="M12 5v15" stroke="#008000" strokeWidth="5" strokeDasharray="2 1" /><path d="M19 5v15" stroke="#00f" strokeWidth="5" strokeDasharray="2 1" /></Box>],
  ["走势图", <Box><path d="M2 18l5-5 3 1 3-3 2 2 4-5h3" fill="none" stroke="#e02020" strokeWidth="1.5" /></Box>],
  ["K线图", <Box><path d="M5 7v11M12 5v15M19 2v12" stroke="#333" /><path d="M3 9h4v6H3zM17 4h4v8h-4z" fill="#f00" /><path d="M10 8h4v9h-4z" fill="#008000" /></Box>],
  ["多窗口", <><path d="M6 2h17v14H6z" fill="#fff" stroke="#4a86e0" strokeWidth="1.6" /><path d="M1 6h18v15H1z" fill="#fff" stroke="#4a86e0" strokeWidth="1.6" /><path d="M4 10h5M4 13h5M4 16h5M11 10h5M11 13h5M11 16h5" stroke="#555" strokeWidth="1.4" /></>],
  ["F10", <Box><T size={12}>F10</T></Box>],
  ["板块树", <Box><path d="M7 8v12h7M7 12h7" fill="none" stroke="#4a86e0" strokeWidth="1.5" /><path d="M4 4h7v4H4zM13 10h7v4h-7zM13 17h7v4h-7z" fill="#ffc020" stroke="#e09000" strokeWidth="0.8" /></Box>],
  ["自选", <Box><T size={15} color="#ff7030" weight={700}>自</T></Box>],
  ["F12", <Box><T size={12}>F12</T></Box>],
  ["公式", <><rect x="1" y="1" width="22" height="22" rx="4" fill="#fff" stroke="#208080" strokeWidth="1.6" /><text x="12" y="17" textAnchor="middle" fontSize="14" fontStyle="italic" fill="#2040d0">f(x)</text></>],
  ["画圆", <><rect x="1" y="2" width="22" height="20" fill="#fff" stroke="#4a86e0" strokeWidth="1.6" /><circle cx="12" cy="12" r="5.5" fill="none" stroke="#1f60d0" strokeWidth="1.8" /></>],
];
const MID_TOOLS = [
  ["叠加走势", <><rect x="1" y="2" width="22" height="20" fill="#fff" stroke="#4a86e0" strokeWidth="1.6" /><path d="M3 11l3-3 2 2 4-4 2 3 3-3 2 2 2-3" fill="none" stroke="#e03030" strokeWidth="1.6" /><path d="M3 19l3-3 2 2 4-4 2 3 3-3 2 2 2-3" fill="none" stroke="#3030e0" strokeWidth="1.6" /></>],
  ["RSI", <text x="12" y="17" textAnchor="middle" fontSize="14" fontWeight="700" fill="#3848d0">RSI</text>],
  ["交易", <><path d="M12 1l4 4H8z" fill="#d02020" /><text x="12" y="20" textAnchor="middle" fontSize="20" fontWeight="700" fill="#d03030" stroke="#902020" strokeWidth="0.8">S</text></>],
  ["移动", <path d="M12 1l4 5h-3v4h5V7l5 5-5 5v-3h-5v4h3l-4 5-4-5h3v-4H6v3l-5-5 5-5v3h5V6H8z" fill="#1858c0" />],
  ["画笔", <><path d="M4 16L17 3l4 4L8 20z" fill="#f0a020" stroke="#905010" strokeWidth="0.8" /><path d="M17 3l2-2 4 4-2 2z" fill="#e08080" /><path d="M4 16l-2 6 6-2z" fill="#333" /></>],
];
const BOTTOM_TOOLS = [
  ["F5", <Box><T size={14}>F5</T></Box>],
  ["刷新", <Box><path d="M4 11c2-7 10-8 13-4l2-2v7h-7l2-2c-2-3-6-2-7 1zM20 13c-2 7-10 8-13 4l-2 2v-7h6l-2 2c2 3 7 2 8-1z" fill="#50b850" /></Box>],
];

function ToolButton({ name, children }) {
  return (
    <button aria-label={name} className="flex min-h-0 flex-1 items-center justify-center">
      <svg viewBox="0 0 24 24" className="block size-6">{children}</svg>
    </button>
  );
}

function ToolRail() {
  return (
    <aside className="flex w-[37px] shrink-0 flex-col border-l-2 border-[#c8c8c8] bg-[#f0f0f0]">
      <div className="flex h-[481px] flex-col">
        {TOP_TOOLS.map(([n, icon]) => <ToolButton key={n} name={n}>{icon}</ToolButton>)}
      </div>
      <div className="mx-1 my-[5px] h-0.5 bg-[#a8a8a8]" />
      <div className="flex h-[173px] flex-col">
        {MID_TOOLS.map(([n, icon]) => <ToolButton key={n} name={n}>{icon}</ToolButton>)}
      </div>
      <div className="mx-1 my-[5px] h-0.5 bg-[#a8a8a8]" />
      <div className="flex h-[484px] flex-col text-lg text-[#1f4e9e]">
        {BOTTOM_TOOLS.map(([n, icon]) => <ToolButton key={n} name={n}>{icon}</ToolButton>)}
        {["1", "5", "15", "30", "60", "日", "周", "月", "N", "多", "季", "年"].map((t) => (
          <button key={t} className={t === "日" ? "min-h-0 flex-1 border-t-2 border-l-2 border-[#a0a0a0] bg-[#fafafa] leading-none" : "min-h-0 flex-1 leading-none"}>{t}</button>
        ))}
      </div>
    </aside>
  );
}

const INDICES = [
  ["上证", "3148.12", "7.40", "0.24%", "3556", true],
  ["沪深", "3661.63", "3.75", "0.10%", "2065", true],
  ["创业", "1893.06", "-2.15", "-0.11%", "1973", false],
];

function Signal() {
  return (
    <svg viewBox="0 0 72 22" className="block h-[22px] w-[72px]">
      <rect width="72" height="9" fill="#f8f8f8" />
      <rect x="15" width="20" height="8" fill="#f00" />
      <rect x="36" width="17" height="8" fill="#008000" />
      <path d="M4 12h9M4 16h9M4 20h9M27 12h9M27 16h9M27 20h9M39 12h9M39 16h9M39 20h9M51 12h9M51 16h9M51 20h9M63 12h9M63 16h9M63 20h9" stroke="#008000" strokeWidth="2.4" />
      <path d="M20 11v9M16 16l4 5 4-5" fill="none" stroke="#008000" strokeWidth="2.4" />
    </svg>
  );
}

function StatusBar() {
  return (
    <footer className="flex h-9 shrink-0 items-center border-b-2 border-[#203040] bg-[#f0f0f0] pt-0.5 text-[21px] font-bold whitespace-nowrap text-[#202020]">
      <svg viewBox="0 0 22 22" className="ml-px block size-[22px] shrink-0">
        <rect x="1" y="1" width="20" height="20" rx="2" fill="#fff0c0" stroke="#f0a000" strokeWidth="2" />
        <rect x="5" y="6" width="12" height="10" fill="#f8b830" />
      </svg>
      <div className="ml-[3px] flex">
        {INDICES.map(([name, v, d, p, vol, up]) => (
          <div key={name} className={up ? "flex w-[411px] items-center text-right text-[#f00000]" : "flex w-[411px] items-center text-right text-[#008000]"}>
            <span className="w-[53px] text-left text-2xl font-light text-[#202020]">{name}</span>
            <span className="w-[76px] text-left">{v}</span>
            <span className="w-[72px]">{d}</span>
            <span className="w-[88px]">{p}</span>
            <span className="w-[98px] text-[#202020]">{vol}<span className="text-2xl font-light">亿</span></span>
          </div>
        ))}
      </div>
      <div className="ml-[3px] flex h-full w-[163px] items-center justify-between border-x border-[#b0b0b0] px-1">
        <Signal />
        <Signal />
      </div>
      <div className="ml-2 text-lg font-normal">平安证券新疆云行情</div>
    </footer>
  );
}

export default function App() {
  return (
    <div className="relative flex h-screen flex-col overflow-hidden bg-black font-['Liberation_Sans','Noto_Sans_CJK_SC',sans-serif] text-[#c0c0c0]">
      <Header />
      <main className="flex min-h-0 flex-1">
        <ChartArea />
        <QuotePanel />
        <ToolRail />
      </main>
      <StatusBar />
      <div className="absolute right-0 bottom-0 flex h-[57px] w-[222px] flex-col bg-white/90 px-4">
        <div className="flex h-8 items-center justify-between pr-2 text-[26px] font-bold text-[#0000f0] italic">
          {"公式指标平台".split("").map((c) => <span key={c}>{c}</span>)}
        </div>
        <div className="text-[25px] leading-6 font-bold text-[#ff4010]">Www.Gszb.Com</div>
      </div>
    </div>
  );
}
